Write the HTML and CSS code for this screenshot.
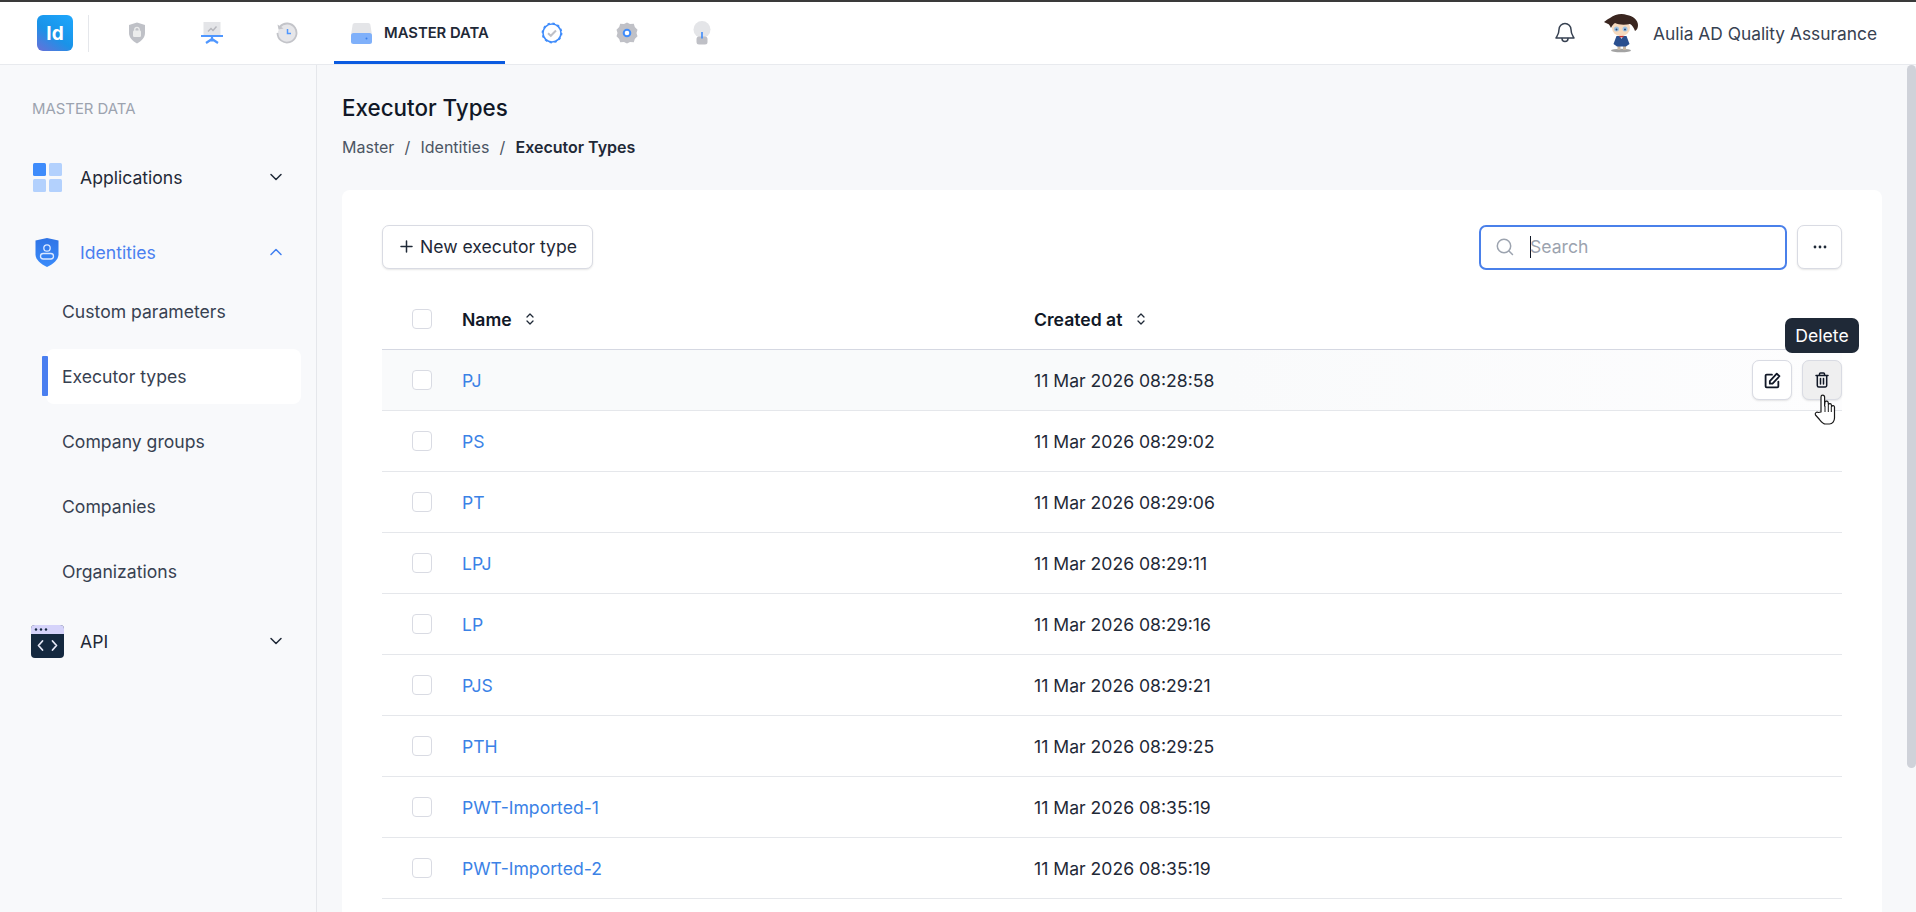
FILE: index.html
```html
<!DOCTYPE html>
<html lang="en">
<head>
<meta charset="utf-8">
<title>Executor Types</title>
<link rel="stylesheet" href="styles.css">
</head>
<body>
<div class="app">
  <header class="topbar">
    <div class="logo">Id</div>
    <div class="top-divider"></div>
    <nav class="top-nav">
      <a class="nav-icon"><svg width="20" height="22" viewBox="0 0 20 22"><path d="M10 .5l8 2.500v8c0 4.500-3.500 8-8 10.500-4.500-2.500-8-6-8-10.500v-8z" fill="#bfc1c7"/><rect x="6" y="8.500" width="8" height="6.500" rx="1.200" fill="#eceded"/><path d="M7.800 9V7.500a2.200 2.200 0 0 1 4.400 0V9" fill="none" stroke="#eceded" stroke-width="1.300"/></svg></a>
      <a class="nav-icon"><svg width="22" height="22" viewBox="0 0 22 22"><rect x="2.500" y="0" width="17" height="13" fill="#e4e5e8"/><path d="M7 9.500l3-3 2 2 3.500-4" fill="none" stroke="#b5b6bc" stroke-width="1.400"/><rect y="13" width="22" height="2" fill="#4f97ff"/><path d="M11 14v4M11 17L5 21M11 17l6 4M8 18.500h6" stroke="#4f97ff" stroke-width="2.200" fill="none"/></svg></a>
      <a class="nav-icon"><svg width="22" height="22" viewBox="0 0 22 22"><path d="M3.800 4.800A9.500 9.500 0 1 1 1.500 11" fill="#e6e6e9" stroke="#c3c4c9" stroke-width="1.800"/><path d="M1.500 2.500l1 5 5-1z" fill="#c3c4c9"/><path d="M11.500 7v4.500H15" fill="none" stroke="#4f97ff" stroke-width="1.500"/></svg></a>
      <a class="nav-tab">
        <svg width="21" height="21" viewBox="0 0 21 21"><path d="M4 0h13a2.500 2.500 0 0 1 2.500 2.500L21 12H0L1.500 2.500A2.500 2.500 0 0 1 4 0z" fill="#e4e5e8"/><rect y="10" width="21" height="11" rx="2.500" fill="#7fb0fa"/><circle cx="15.500" cy="15.500" r="1" fill="#3b7fe8"/></svg>
        <span>MASTER DATA</span>
      </a>
      <a class="nav-icon"><svg width="22" height="22" viewBox="0 0 22 22"><circle cx="11" cy="11" r="9" fill="none" stroke="#3f8cfb" stroke-width="1.600"/><circle cx="11" cy="11" r="9.700" fill="none" stroke="#3f8cfb" stroke-width="1.400" stroke-dasharray="2.400 2.700"/><path d="M7 11.300l2.800 2.500L15 8.500" fill="none" stroke="#bfc0c6" stroke-width="2"/></svg></a>
      <a class="nav-icon"><svg width="22" height="22" viewBox="0 0 22 22"><path d="M11 .5l3 1.500 3.800-.2 1 3.200 2.700 2.800-1 3.200 1 3.200-2.700 2.800-1 3.200-3.800-.2-3 1.500-3-1.500-3.800.2-1-3.200L.5 14.200l1-3.200-1-3.200L3.200 5l1-3.200 3.800.2z" fill="#c0c1c7"/><circle cx="11" cy="11" r="3.300" fill="#fff" stroke="#3f8cfb" stroke-width="2"/></svg></a>
      <a class="nav-icon"><svg width="18" height="24" viewBox="0 0 18 24"><circle cx="9" cy="8.500" r="8.500" fill="#e4e5e8"/><rect x="3.500" y="15.500" width="11" height="8" rx="2.500" fill="#bfc0c6"/><rect x="8.200" y="11" width="1.600" height="6.500" fill="#3f8cfb"/></svg></a>
    </nav>
    <div class="top-right">
      <svg class="bell" width="20" height="22" viewBox="0 0 20 22" fill="none" stroke="#374151" stroke-width="1.500" stroke-linejoin="round" stroke-linecap="round"><path d="M10 1.500a6 6 0 0 0-6 6c0 5-2 6.500-3 8.500h18c-1-2-3-3.500-3-8.500a6 6 0 0 0-6-6z"/><path d="M7 16.500a3 3 0 0 0 6 0"/></svg>
      <svg class="avatar" width="36" height="40" viewBox="0 0 36 40"><ellipse cx="17" cy="37.500" rx="10" ry="1.800" fill="#a3a3a3"/><path d="M13.500 33h3v4h-3zM19 33h3v4h-3z" fill="#c9b7a2"/><path d="M12.500 23h10l3 8-3.500 2.500H13L9.500 31z" fill="#2a4f8f"/><path d="M15 22h5l-2.500 4z" fill="#e9edf2"/><rect x="15.500" y="22.500" width="4" height="1.800" fill="#c9302c"/><ellipse cx="17" cy="15" rx="9" ry="8" fill="#f6d9bd"/><path d="M0 9c2-1 3-3 6-4 5-4 12-5 17-3 6 1 11 5 11 10 0 3-1 5-3 6-1-3-3-6-5-7-5 1-11 1-15-1-2 1-3 3-4 5-1-2-2-4-3-4-1-1-3-1-4-2z" fill="#3a2620"/><circle cx="12.500" cy="16" r="2.500" fill="#9fc4e4"/><circle cx="21" cy="16" r="2.500" fill="#9fc4e4"/><circle cx="12.500" cy="16.500" r="1" fill="#2b4a78"/><circle cx="21" cy="16.500" r="1" fill="#2b4a78"/></svg>
      <span class="user">Aulia AD Quality Assurance</span>
    </div>
  </header>
  <div class="body-row">
    <aside class="sidebar">
      <div class="side-label">MASTER DATA</div>
      <a class="side-group g-apps">
        <span class="side-icon"><svg width="29" height="29" viewBox="0 0 29 29"><rect width="13" height="13" rx="1.500" fill="#3f8cfb"/><rect x="16" width="13" height="13" rx="1.500" fill="#b3d1fd"/><rect y="16" width="13" height="13" rx="1.500" fill="#b3d1fd"/><rect x="16" y="16" width="13" height="13" rx="1.500" fill="#b3d1fd"/></svg></span>
        <span class="side-text">Applications</span>
        <svg class="chev" width="14" height="14" viewBox="0 0 14 14" fill="none" stroke="#1f2937" stroke-width="1.500" stroke-linecap="round" stroke-linejoin="round"><path d="M2 4.500l5 5 5-5"/></svg>
      </a>
      <a class="side-group g-ident active">
        <span class="side-icon"><svg width="24" height="29" viewBox="0 0 24 29"><defs><linearGradient id="sh" x1="0" y1="0" x2="0" y2="1"><stop offset="0" stop-color="#2f74e6"/><stop offset="1" stop-color="#3a8bfa"/></linearGradient></defs><path d="M12 0l11.500 2.500v14c0 5-5 9.500-11.500 12.500C5.500 26 .5 21.500.5 16.500v-14z" fill="url(#sh)"/><circle cx="12" cy="10" r="3.200" fill="none" stroke="#dbe8ff" stroke-width="1.300"/><rect x="5.500" y="15.500" width="13" height="5.500" rx="2.700" fill="none" stroke="#dbe8ff" stroke-width="1.300"/></svg></span>
        <span class="side-text">Identities</span>
        <svg class="chev" width="14" height="14" viewBox="0 0 14 14" fill="none" stroke="#3f7ff0" stroke-width="1.500" stroke-linecap="round" stroke-linejoin="round"><path d="M2 9.500l5-5 5 5"/></svg>
      </a>
      <a class="side-sub">Custom parameters</a>
      <a class="side-sub current">Executor types</a>
      <a class="side-sub">Company groups</a>
      <a class="side-sub">Companies</a>
      <a class="side-sub">Organizations</a>
      <a class="side-group g-api">
        <span class="side-icon"><svg width="33" height="33" viewBox="0 0 33 33"><rect width="33" height="33" rx="4" fill="#14283f"/><path d="M0 9V4a4 4 0 0 1 4-4h25a4 4 0 0 1 4 4v5z" fill="#d5d3fa"/><circle cx="5" cy="4.500" r="1.200" fill="#14283f"/><circle cx="10" cy="4.500" r="1.200" fill="#14283f"/><circle cx="15" cy="4.500" r="1.200" fill="#14283f"/><path d="M11.500 16l-4 4.500 4 4.500M21.500 16l4 4.500-4 4.500" fill="none" stroke="#e5e7f5" stroke-width="1.800" stroke-linecap="round" stroke-linejoin="round"/></svg></span>
        <span class="side-text">API</span>
        <svg class="chev" width="14" height="14" viewBox="0 0 14 14" fill="none" stroke="#1f2937" stroke-width="1.500" stroke-linecap="round" stroke-linejoin="round"><path d="M2 4.500l5 5 5-5"/></svg>
      </a>
    </aside>
    <main class="main">
      <h1 class="title">Executor Types</h1>
      <div class="crumbs"><span>Master</span><i>/</i><span>Identities</span><i>/</i><b>Executor Types</b></div>
      <section class="card">
        <div class="toolbar">
          <button class="btn"><svg width="13" height="13" viewBox="0 0 13 13" stroke="#1f2937" stroke-width="1.500" stroke-linecap="round"><path d="M6.500 1v11M1 6.500h11"/></svg>New executor type</button>
          <div class="tool-right">
            <div class="search">
              <svg width="18" height="18" viewBox="0 0 18 18" fill="none" stroke="#9ca3af" stroke-width="1.500" stroke-linecap="round"><circle cx="8" cy="8" r="6.700"/><path d="M13 13l3.500 3.500"/></svg>
              <span class="caret"></span><span class="placeholder">Search</span>
            </div>
            <button class="btn-icon more"><svg width="14" height="4" viewBox="0 0 14 4" fill="#1f2937"><circle cx="2" cy="2" r="1.400"/><circle cx="7" cy="2" r="1.400"/><circle cx="12" cy="2" r="1.400"/></svg></button>
          </div>
        </div>
        <div class="table">
          <div class="row head">
            <span class="check"></span>
            <span class="col-name">Name<svg class="sort" width="8" height="12" viewBox="0 0 8 12" fill="none" stroke="#1f2937" stroke-width="1.300" stroke-linecap="round" stroke-linejoin="round"><path d="M1 4l3-3 3 3M1 8l3 3 3-3"/></svg></span>
            <span class="col-date">Created at<svg class="sort" width="8" height="12" viewBox="0 0 8 12" fill="none" stroke="#1f2937" stroke-width="1.300" stroke-linecap="round" stroke-linejoin="round"><path d="M1 4l3-3 3 3M1 8l3 3 3-3"/></svg></span>
          </div>
          <div class="row hover">
            <span class="check"></span><a class="col-name">PJ</a><span class="col-date">11 Mar 2026 08:28:58</span>
            <div class="actions">
              <button class="btn-icon small"><svg width="17" height="17" viewBox="0 0 16 16" fill="none" stroke="#111827" stroke-width="1.700" stroke-linecap="round" stroke-linejoin="round"><path d="M7.500 2.500H2.500a1 1 0 0 0-1 1v10a1 1 0 0 0 1 1h10a1 1 0 0 0 1-1V9"/><path d="M5.500 8.500l6.500-7 2.500 2.500-6.500 7H5.500z"/></svg></button>
              <button class="btn-icon small pressed"><svg width="14" height="16" viewBox="0 0 14 16" fill="none" stroke="#111827" stroke-width="1.500" stroke-linecap="round" stroke-linejoin="round"><path d="M1 3.500h12M4.500 3.500V2a1 1 0 0 1 1-1h3a1 1 0 0 1 1 1v1.500M2.300 3.500v10a1.500 1.500 0 0 0 1.500 1.500h6.400a1.500 1.500 0 0 0 1.500-1.500v-10M5.500 6.500v5.500M8.500 6.500v5.500"/></svg></button>
              <div class="tooltip">Delete</div>
              <svg class="hand" width="24" height="31" viewBox="0 0 24 31"><path d="M7 18V3a1.800 1.800 0 0 1 3.600 0v9l.4-4a1.700 1.700 0 0 1 3.200.5l.2 2a1.600 1.600 0 0 1 3 .5l.2 1.500a1.500 1.500 0 0 1 2.900.5V24c0 3-2 6-5 6h-4c-2.500 0-4-2-6-4.500L1.500 21c-1-2 1-3.500 3-2.500z" fill="#fff" stroke="#1a1a1a" stroke-width="1.200" stroke-linejoin="round"/><path d="M11 12v6M14.300 11v7M17.300 12.500V18" stroke="#1a1a1a" stroke-width="1"/></svg>
            </div>
          </div>
          <div class="row"><span class="check"></span><a class="col-name">PS</a><span class="col-date">11 Mar 2026 08:29:02</span></div>
          <div class="row"><span class="check"></span><a class="col-name">PT</a><span class="col-date">11 Mar 2026 08:29:06</span></div>
          <div class="row"><span class="check"></span><a class="col-name">LPJ</a><span class="col-date">11 Mar 2026 08:29:11</span></div>
          <div class="row"><span class="check"></span><a class="col-name">LP</a><span class="col-date">11 Mar 2026 08:29:16</span></div>
          <div class="row"><span class="check"></span><a class="col-name">PJS</a><span class="col-date">11 Mar 2026 08:29:21</span></div>
          <div class="row"><span class="check"></span><a class="col-name">PTH</a><span class="col-date">11 Mar 2026 08:29:25</span></div>
          <div class="row"><span class="check"></span><a class="col-name">PWT-Imported-1</a><span class="col-date">11 Mar 2026 08:35:19</span></div>
          <div class="row"><span class="check"></span><a class="col-name">PWT-Imported-2</a><span class="col-date">11 Mar 2026 08:35:19</span></div>
        </div>
      </section>
    </main>
    <div class="rail"><div class="thumb"></div></div>
  </div>
</div>
</body>
</html>
```
FILE: styles.css
```css
* { box-sizing: border-box; }
html, body { margin: 0; height: 100%; overflow: hidden; }
body { font-family: Inter, "Liberation Sans", sans-serif; font-size: 17.6px; color: #111827; background: #f8f9fb; }
.app { height: 912px; display: flex; flex-direction: column; }

.topbar { height: 65px; flex: none; display: flex; align-items: center; background: #fff; border-top: 2px solid #3a3a3a; border-bottom: 1px solid #e8eaee; padding-left: 37px; padding-right: 39px; }
.logo { width: 36px; height: 36px; border-radius: 6px; background: linear-gradient(35deg, #6a6fd8 0%, #1993e8 45%, #1ea7fd 100%); color: #fff; font-weight: 700; font-size: 19px; display: flex; align-items: center; justify-content: center; }
.top-divider { width: 1px; height: 37px; background: #e5e7eb; margin-left: 15px; }
.top-nav { display: flex; align-items: center; height: 100%; margin-left: 10px; }
.nav-icon { width: 75px; height: 100%; display: flex; align-items: center; justify-content: center; }
.nav-tab { height: 100%; width: 171px; margin-left: 10px; margin-right: 9px; display: flex; align-items: center; gap: 12px; padding-left: 17px; border-bottom: 3px solid #0b5be0; padding-top: 3px; font-size: 14.8px; font-weight: 600; color: #1f2937; }
.top-right { margin-left: auto; display: flex; align-items: center; }
.avatar { margin-left: 29px; }
.user { margin-left: 13px; font-size: 17.35px; color: #374151; }

.body-row { flex: 1; min-height: 0; display: flex; background: #f7f8fa; }
.sidebar { width: 317px; flex: none; border-right: 1px solid #e5e7eb; padding: 36px 15px 0 32px; background: #f8f9fb; }
.side-label { font-size: 14.9px; line-height: 17px; color: #9ca3af; }
.side-group { display: flex; align-items: center; color: #1f2937; height: 33px; position: relative; }
.side-icon { width: 48px; flex: none; display: flex; align-items: center; }
.g-apps { margin-top: 43px; }
.g-apps .side-icon { padding-left: 1px; }
.g-ident { margin-top: 42px; color: #4a7ff0; margin-bottom: 10px; }
.g-ident .side-icon { padding-left: 3px; }
.g-api { margin-top: 21px; }
.g-api .side-icon { margin-left: -1px; width: 49px; }
.chev { position: absolute; left: 237px; top: 9px; }
.side-sub { display: flex; align-items: center; height: 65px; padding-left: 30px; color: #374151; position: relative; }
.side-sub.current { height: 55px; margin: 5px 0; margin-left: 14px; padding-left: 16px; background: #fff; border-radius: 8px; }
.side-sub.current::before { content: ""; position: absolute; left: -4px; top: 7px; width: 6px; height: 40px; background: #4a7ff0; border-radius: 1px; }

.main { flex: 1; min-width: 0; overflow: hidden; padding: 29px 25px 0 25px; }
.rail { width: 9px; flex: none; }
.thumb { height: 703px; background: #cfd2d9; border-radius: 5px; }
.title { margin: 0; font-size: 22.4px; line-height: 28px; font-weight: 500; color: #111827; }
.crumbs { margin-top: 13px; font-size: 16px; line-height: 24px; color: #4b5563; display: flex; }
.crumbs i { font-style: normal; margin: 0 10.2px; }
.crumbs b { font-weight: 600; color: #1f2937; }
.card { margin-top: 31px; background: #fff; border-radius: 8px 8px 0 0; padding: 35px 40px 124px; }
.toolbar { display: flex; justify-content: space-between; align-items: flex-start; }
.btn { height: 44px; width: 211px; display: flex; align-items: center; justify-content: center; gap: 7px; padding: 0 0 2px 2px; background: #fff; border: 1px solid #d9dbe3; border-radius: 7px; box-shadow: 0 1px 2px rgba(0,0,0,.1); font: 17.6px Inter, "Liberation Sans", sans-serif; color: #1f2937; }
.tool-right { display: flex; gap: 10px; }
.search { width: 308px; height: 45px; border: 2px solid #4a80ea; border-radius: 7px; display: flex; align-items: center; padding-left: 15px; padding-bottom: 2px; background: #fff; }
.caret { width: 1px; height: 22px; background: #111827; margin-left: 16px; }
.placeholder { color: #9ca3af; margin-left: -1px; }
.btn-icon { display: flex; align-items: center; justify-content: center; padding: 0; background: #fff; border: 1px solid #d9dbe3; border-radius: 7px; box-shadow: 0 1px 2px rgba(0,0,0,.1); }
.more { width: 45px; height: 44px; }
.table { margin-top: 9px; }
.row { height: 61px; display: flex; align-items: center; border-bottom: 1px solid #e5e7eb; position: relative; }
.row.head { height: 71px; padding-top: 10px; border-bottom-color: #d5d8e2; font-weight: 600; color: #111827; }
.row.hover { background: linear-gradient(90deg, #f9fafb 0%, #f9fafb 58%, #fdfdfe 100%); }
.check { width: 20px; height: 20px; flex: none; margin-left: 30px; border: 1px solid #d9dbe3; border-radius: 4px; background: #fff; }
.col-name { width: 572px; margin-left: 30px; display: flex; align-items: center; gap: 14px; flex: none; }
a.col-name { color: #3b82e6; }
.col-date { display: flex; align-items: center; gap: 15px; color: #111827; }
.row:not(.head) .col-date { color: #1f2937; }
.actions { margin-left: auto; display: flex; gap: 10px; position: relative; }
.small { width: 40px; height: 40px; }
.pressed { background: #efeff0; }
.tooltip { position: absolute; right: -17px; top: -42px; width: 74px; height: 35px; background: #1f2937; color: #fff; border-radius: 7px; display: flex; align-items: center; justify-content: center; }
.hand { position: absolute; left: 62px; top: 34px; }
```
